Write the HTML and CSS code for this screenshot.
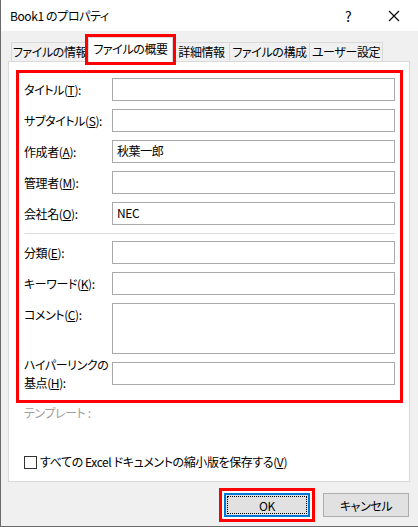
FILE: index.html
```html
<!DOCTYPE html>
<html lang="ja">
<head>
    <meta charset="UTF-8">
    <meta name="viewport" content="width=device-width, initial-scale=1.0">
    <title>Book1 のプロパティ</title>
    <link rel="stylesheet" href="styles.css">
</head>
<body>
    <div class="window">
        <div class="titlebar">
            <span class="title">Book1 のプロパティ</span>
            <span class="help">?</span>
            <span class="close">
                <svg width="12" height="12" viewBox="0 0 12 12">
                    <path d="M1 1 L11 11 M11 1 L1 11" stroke="#000" stroke-width="1.1" fill="none"/>
                </svg>
            </span>
        </div>
        <div class="content">
            <div class="tabs">
                <div class="tab tab-info">ファイルの情報</div>
                <div class="tab tab-summary selected">ファイルの概要</div>
                <div class="tab tab-detail">詳細情報</div>
                <div class="tab tab-parts">ファイルの構成</div>
                <div class="tab tab-user">ユーザー設定</div>
            </div>
            <div class="panel">
                <div class="fields">
                    <div class="row">
                        <label>タイトル(<u>T</u>):</label>
                        <div class="input"></div>
                    </div>
                    <div class="row">
                        <label>サブタイトル(<u>S</u>):</label>
                        <div class="input"></div>
                    </div>
                    <div class="row">
                        <label>作成者(<u>A</u>):</label>
                        <div class="input">秋葉一郎</div>
                    </div>
                    <div class="row">
                        <label>管理者(<u>M</u>):</label>
                        <div class="input"></div>
                    </div>
                    <div class="row">
                        <label>会社名(<u>O</u>):</label>
                        <div class="input">NEC</div>
                    </div>
                    <div class="separator"></div>
                    <div class="row">
                        <label>分類(<u>E</u>):</label>
                        <div class="input"></div>
                    </div>
                    <div class="row">
                        <label>キーワード(<u>K</u>):</label>
                        <div class="input"></div>
                    </div>
                    <div class="row row-top">
                        <label>コメント(<u>C</u>):</label>
                        <div class="input textarea"></div>
                    </div>
                    <div class="row row-link">
                        <label>ハイパーリンクの<br>基点(<u>H</u>):</label>
                        <div class="input"></div>
                    </div>
                </div>
                <div class="template">テンプレート :</div>
                <div class="check">
                    <span class="box"></span>
                    <span>すべての Excel ドキュメントの縮小版を保存する(<u>V</u>)</span>
                </div>
            </div>
            <div class="buttons">
                <div class="button ok"><span class="focus">OK</span></div>
                <div class="button">キャンセル</div>
            </div>
        </div>
    </div>
</body>
</html>
```

FILE: styles.css
```css
body {
    margin: 0;
    font-family: "Noto Sans CJK JP", "Noto Sans", sans-serif;
    font-size: 12px;
    font-feature-settings: "palt";
    letter-spacing: -0.4px;
    color: #000;
    background-color: #f0f0f0;
}
.window {
    width: 418px;
    height: 527px;
    box-sizing: border-box;
    border-left: 1px solid #6a6a6a;
    border-bottom: 1px solid #6a6a6a;
    background-color: #f0f0f0;
    display: flex;
    flex-direction: column;
}
.titlebar {
    height: 31px;
    background: #fff;
    display: flex;
    align-items: center;
}
.title {
    margin-left: 9px;
    flex: 1;
}
.help {
    width: 12px;
    text-align: center;
    font-size: 14px;
    margin-right: 34px;
}
.close {
    display: flex;
    margin-right: 18px;
}
.content {
    padding: 0 8px 0 7px;
}
.tabs {
    display: flex;
    align-items: flex-end;
    height: 24px;
    margin-top: 6px;
    margin-left: 3px;
}
.tab {
    height: 19px;
    box-sizing: border-box;
    border: 1px solid #d9d9d9;
    border-bottom: none;
    background: #f0f0f0;
    line-height: 18px;
    text-align: center;
    white-space: nowrap;
    margin-left: -1px;
}
.tab-info {
    width: 78px;
    margin-left: 0;
}
.tab-summary {
    width: 85px;
    margin-right: 1px;
}
.tab-detail {
    width: 57px;
}
.tab-parts {
    width: 81px;
}
.tab-user {
    width: 74px;
}
.tab.selected {
    height: 25px;
    margin-bottom: -1px;
    background: #fff;
    position: relative;
    z-index: 1;
    line-height: 22px;
    outline: 3px solid #ff0000;
}
.panel {
    height: 421px;
    box-sizing: border-box;
    background: #fff;
    border: 1px solid #d9d9d9;
    padding: 8px 6px 0 7px;
}
.fields {
    border: 3px solid #ff0000;
    padding: 5px 5px 8px 5px;
}
.row {
    display: flex;
    align-items: center;
    margin-bottom: 8px;
}
.row:last-child {
    margin-bottom: 0;
}
.row label {
    width: 88px;
    flex: none;
    line-height: 15px;
    white-space: nowrap;
}
.row-top {
    align-items: flex-start;
}
.row-top label {
    padding-top: 4px;
}
.row-link {
    margin-top: 3px;
    align-items: flex-start;
}
.row-link label {
    line-height: 18px;
    margin-top: -6px;
}
.input {
    flex: 1;
    height: 23px;
    box-sizing: border-box;
    border: 1px solid #a9a9a9;
    padding-left: 4px;
    line-height: 20px;
}
.textarea {
    height: 51px;
}
.separator {
    height: 1px;
    background: #dcdcdc;
    margin: 4px 0 7px;
}
.template {
    color: #a0a0a0;
    margin: 2px 0 0 8px;
    line-height: 15px;
}
.check {
    display: flex;
    align-items: center;
    margin: 34px 0 0 8px;
    line-height: 16px;
}
.box {
    width: 13px;
    height: 13px;
    box-sizing: border-box;
    border: 1px solid #333;
    margin-right: 3px;
}
.buttons {
    display: flex;
    justify-content: flex-end;
    gap: 13px;
    margin-top: 11px;
    padding-right: 1px;
}
.button {
    width: 86px;
    height: 24px;
    box-sizing: border-box;
    background: #e1e1e1;
    border: 1px solid #adadad;
    display: flex;
    align-items: center;
    justify-content: center;
}
.button.ok {
    border: 2px solid #0078d7;
    padding: 1px;
    box-shadow: 0 0 0 2px #fff;
    outline: 3px solid #ff0000;
    outline-offset: 2px;
}
.focus {
    flex: 1;
    align-self: stretch;
    border: 1px dotted #000;
    display: flex;
    align-items: center;
    justify-content: center;
}
```
